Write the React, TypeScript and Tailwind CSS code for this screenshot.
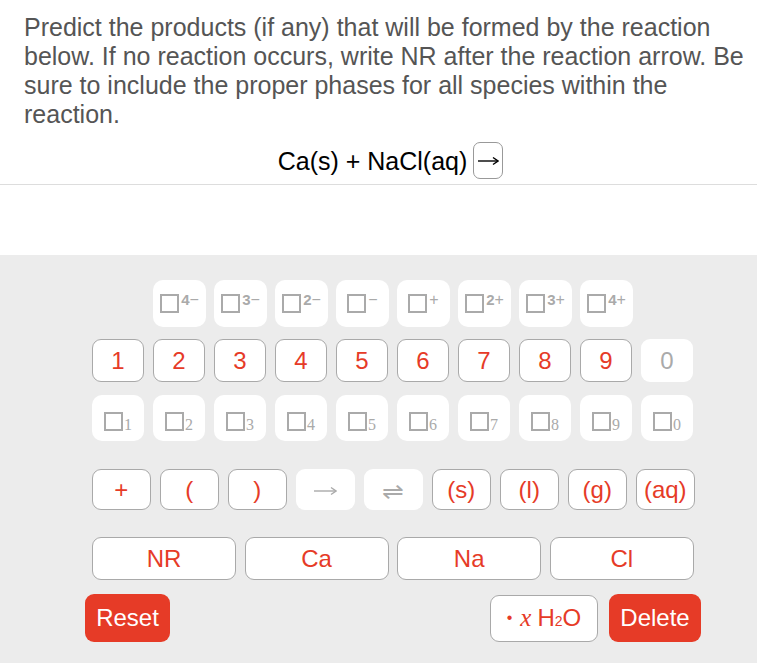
import React from 'react';

const red = 'text-[#e63b27]';

function Box() {
  return <span className="inline-block w-[19px] h-[19px] border-2 border-[#aaa]" />;
}

function Arrow({ w, color }: { w: number; color: string }) {
  return (
    <svg width={w} height="10" viewBox={`0 0 ${w} 10`} fill="none" stroke={color} strokeWidth="1.4">
      <path d={`M1 5H${w - 1}`} />
      <path d={`M${w - 6} 1.5L${w - 1} 5L${w - 6} 8.5`} />
    </svg>
  );
}

function ChargeKey({ n, sign }: { n: string; sign: string }) {
  return (
    <button
      type="button"
      className="w-[53px] h-[47px] rounded-[10px] bg-white flex items-center justify-center"
    >
      <span className="flex items-start">
        <Box />
        <span className="text-[15px] leading-[12px] text-[#aaa] font-bold ml-[2px]">{n}</span>
        <span className="text-[16px] leading-[11px] text-[#aaa]">{sign}</span>
      </span>
    </button>
  );
}

function SubKey({ n }: { n: string }) {
  return (
    <button
      type="button"
      className="w-[52px] h-[46px] rounded-[10px] bg-white flex items-center justify-center"
    >
      <span className="flex items-end mt-[6px]">
        <Box />
        <span className="text-[16px] leading-[12px] text-[#aaa] font-['Liberation_Serif',serif] ml-[1px]">
          {n}
        </span>
      </span>
    </button>
  );
}

function Key({
  label,
  w,
  h,
  disabled,
}: {
  label: React.ReactNode;
  w: string;
  h: string;
  disabled?: boolean;
}) {
  return (
    <button
      type="button"
      className={`${w} ${h} rounded-[9px] bg-white text-[24px] leading-[28px] flex items-center justify-center ${
        disabled ? 'text-[#aaa] border border-transparent' : `${red} border border-[#a9a9a9]`
      }`}
    >
      {label}
    </button>
  );
}

export default function App() {
  const charges = [
    ['4', '−'],
    ['3', '−'],
    ['2', '−'],
    ['', '−'],
    ['', '+'],
    ['2', '+'],
    ['3', '+'],
    ['4', '+'],
  ];
  const digits = ['1', '2', '3', '4', '5', '6', '7', '8', '9'];
  const subs = ['1', '2', '3', '4', '5', '6', '7', '8', '9', '0'];

  return (
    <div className="w-[757px] h-[663px] flex flex-col bg-white font-['Liberation_Sans',Arial,sans-serif] overflow-hidden">
      <div className="h-[255px] shrink-0">
        <p className="pl-[24px] pr-[6px] pt-[13px] text-[25px] leading-[29px] text-[#555]">
          Predict the products (if any) that will be formed by the reaction below. If no reaction
          occurs, write NR after the reaction arrow. Be sure to include the proper phases for all
          species within the reaction.
        </p>
        <div className="mt-[13px] h-[37px] flex items-center justify-center pl-[24px] text-[25px] leading-[29px] text-black">
          <span className="mt-[2px]">Ca(s) + NaCl(aq)</span>
          <span className="ml-[6px] w-[30px] h-[37px] border border-[#999] rounded-[7px] flex items-center justify-center">
            <Arrow w={22} color="#000" />
          </span>
        </div>
        <div className="mt-[5px] border-b border-[#ddd]" />
      </div>

      <div className="flex-1 bg-[#ececec] pl-[92px] pt-[25px]">
        <div className="flex gap-[8px] ml-[61px]">
          {charges.map(([n, s], i) => (
            <ChargeKey key={i} n={n} sign={s} />
          ))}
        </div>

        <div className="flex gap-[9px] mt-[12px]">
          {digits.map((d) => (
            <Key key={d} label={d} w="w-[52px]" h="h-[43px]" />
          ))}
          <Key label="0" w="w-[52px]" h="h-[43px]" disabled />
        </div>

        <div className="flex gap-[9px] mt-[13px]">
          {subs.map((d) => (
            <SubKey key={d} n={d} />
          ))}
        </div>

        <div className="flex gap-[9.5px] mt-[28px]">
          <Key label="+" w="w-[58.5px]" h="h-[41px]" />
          <Key label="(" w="w-[58.5px]" h="h-[41px]" />
          <Key label=")" w="w-[58.5px]" h="h-[41px]" />
          <Key label={<span className="mt-[3px]"><Arrow w={24} color="#aaa" /></span>} w="w-[58.5px]" h="h-[41px]" disabled />
          <Key label={<span className="text-[26px] mt-[2px]">⇌</span>} w="w-[58.5px]" h="h-[41px]" disabled />
          <Key label="(s)" w="w-[58.5px]" h="h-[41px]" />
          <Key label="(l)" w="w-[58.5px]" h="h-[41px]" />
          <Key label="(g)" w="w-[58.5px]" h="h-[41px]" />
          <Key label="(aq)" w="w-[58.5px]" h="h-[41px]" />
        </div>

        <div className="flex gap-[8.6px] mt-[27px]">
          {['NR', 'Ca', 'Na', 'Cl'].map((el) => (
            <Key key={el} label={el} w="w-[144px]" h="h-[43px]" />
          ))}
        </div>

        <div className="flex items-center mt-[14px] -ml-[7px] w-[616px]">
          <button
            type="button"
            className="w-[85px] h-[48px] rounded-[9px] bg-[#e63b27] text-white text-[24px]"
          >
            Reset
          </button>
          <div className="flex-1" />
          <button
            type="button"
            className={`w-[108px] h-[47px] rounded-[9px] bg-white border border-[#a9a9a9] ${red} text-[24px] flex items-center justify-center`}
          >
            <span className="text-[16px] mr-[8px]">•</span>
            <span className="italic font-['Liberation_Serif',serif] text-[25px] mr-[6px]">x</span>
            <span>
              H<span className="text-[14px]">2</span>O
            </span>
          </button>
          <button
            type="button"
            className="ml-[11px] w-[92px] h-[48px] rounded-[9px] bg-[#e63b27] text-white text-[24px]"
          >
            Delete
          </button>
        </div>
      </div>
    </div>
  );
}
